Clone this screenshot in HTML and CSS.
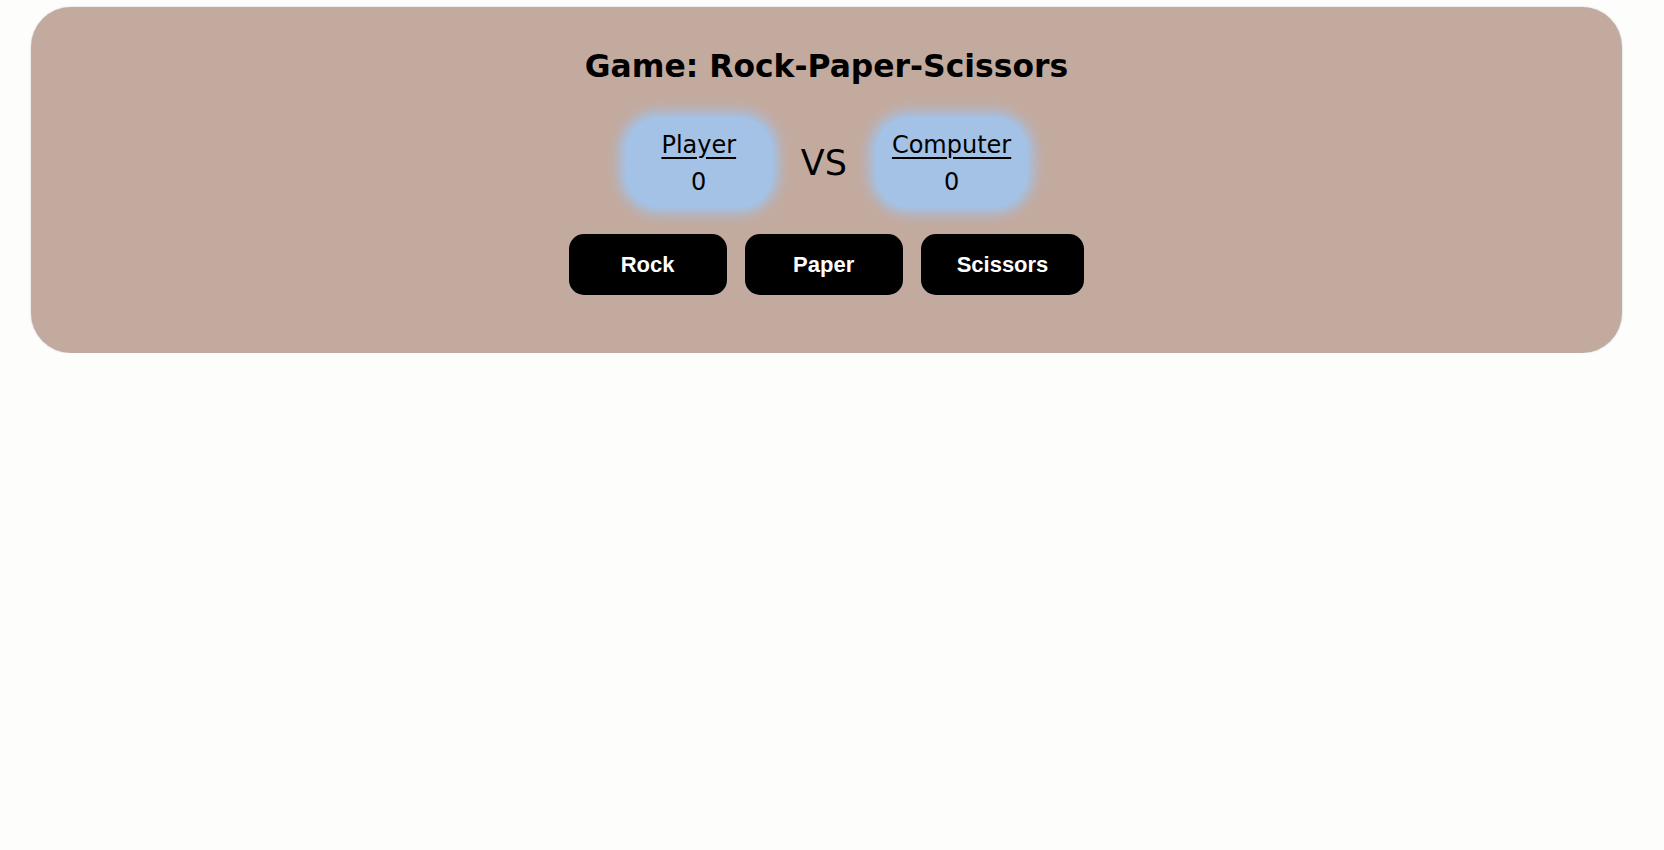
FILE: index.html
```html
<!DOCTYPE html>
<html lang="en">
<head>
<meta charset="utf-8">
<title>Rock-Paper-Scissors</title>
<link rel="stylesheet" href="styles.css">
</head>
<body>
  <div class="game">
    <h1 class="title">Game: Rock-Paper-Scissors</h1>
    <div class="scores">
      <div class="score">
        <span class="label">Player</span>
        <span class="num">0</span>
      </div>
      <div class="vs">VS</div>
      <div class="score">
        <span class="label">Computer</span>
        <span class="num">0</span>
      </div>
    </div>
    <div class="buttons">
      <button class="btn">Rock</button>
      <button class="btn">Paper</button>
      <button class="btn">Scissors</button>
    </div>
  </div>
</body>
</html>
```
FILE: styles.css
```css
html, body {
  margin: 0;
  padding: 0;
  background: #fdfdfb;
}

body {
  font-family: "Comic Sans MS", "DejaVu Sans", sans-serif;
  color: #000;
}

.game {
  margin: 7px 42px 0 31px;
  height: 346px;
  box-sizing: border-box;
  padding: 39px 0 58px;
  background: #c3aa9f;
  border-radius: 40px;
  box-shadow: 0 0 2px rgba(130, 140, 175, 0.45);
  display: flex;
  flex-direction: column;
  align-items: center;
}

.title {
  margin: 0;
  font-size: 31.4px;
  line-height: 40px;
  font-weight: bold;
}

.scores {
  margin-top: 31px;
  height: 91px;
  display: flex;
  align-items: center;
  gap: 28px;
}

.score {
  min-width: 148px;
  height: 91px;
  box-sizing: border-box;
  padding: 7px 17px 5px;
  background: #a4c2e6;
  border-radius: 34px;
  box-shadow: 0 0 12px 6px #a4c2e6;
  display: flex;
  flex-direction: column;
  align-items: center;
  justify-content: center;
  font-size: 24px;
  line-height: 37px;
}

.label {
  text-decoration: underline;
  text-underline-offset: 4px;
}

.vs {
  font-size: 35px;
  line-height: 40px;
}

.buttons {
  margin-top: 26px;
  display: flex;
  gap: 18px;
}

.btn {
  min-width: 158px;
  height: 61px;
  padding: 0 36px;
  border: none;
  border-radius: 15px;
  background: #000;
  color: #fff;
  font-family: "Liberation Sans", Arial, sans-serif;
  font-weight: bold;
  font-size: 22px;
}
```
